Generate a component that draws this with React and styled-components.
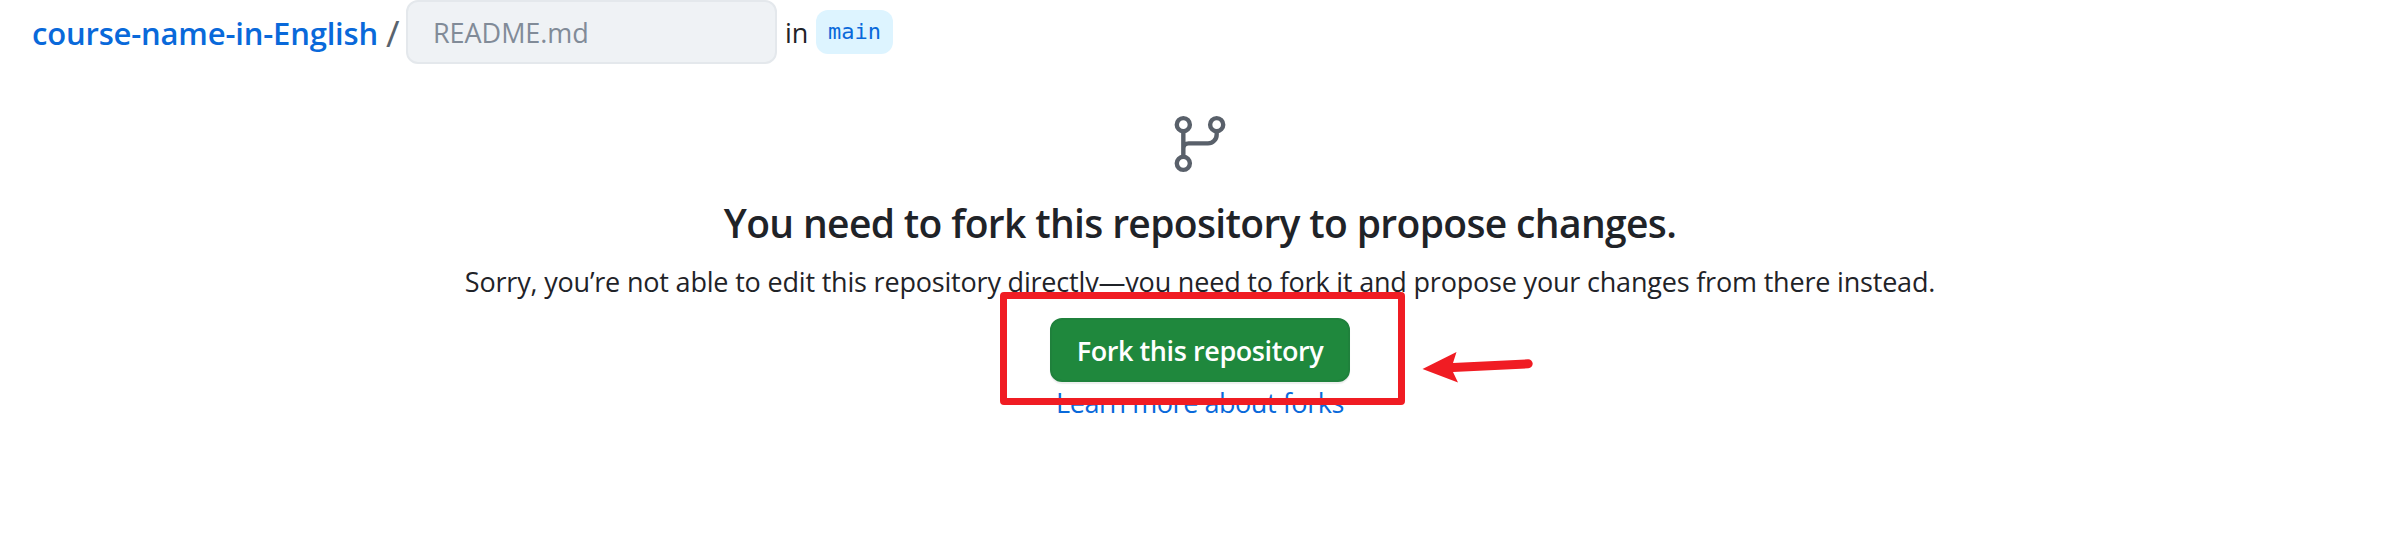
import React from "react";
import styled, { createGlobalStyle } from "styled-components";

const GlobalStyle = createGlobalStyle`
  * { box-sizing: border-box; }
  body {
    margin: 0;
    background: #fff;
    color: #1f2328;
    font-family: "Open Sans", "Noto Sans", sans-serif;
    font-size: 27px;
  }
`;

const Page = styled.div`
  position: relative;
  height: 552px;
  overflow: hidden;
`;

const Breadcrumb = styled.header`
  display: flex;
  align-items: center;
  height: 64px;
  padding-left: 32px;
  white-space: nowrap;
`;

const RepoLink = styled.a`
  width: 354px;
  color: #0969da;
  font-size: 31px;
  font-weight: 600;
  line-height: 42px;
  padding-top: 1px;
  letter-spacing: -0.18px;
`;

const Separator = styled.span`
  width: 20px;
  color: #59636e;
  font-size: 37px;
  line-height: 64px;
  padding-top: 2px;
`;

const FileName = styled.input`
  width: 371px;
  height: 64px;
  padding: 1px 25px 0;
  border: 2px solid #e4e8ec;
  border-radius: 12px;
  background: #eff2f5;
  color: #1f2328;
  font: inherit;
  letter-spacing: -0.05px;
  &::placeholder {
    color: #818b98;
    opacity: 1;
  }
`;

const InLabel = styled.span`
  width: 31px;
  margin-left: 8px;
`;

const Branch = styled.span`
  display: flex;
  align-items: center;
  justify-content: center;
  width: 77px;
  height: 44px;
  margin-bottom: 1px;
  padding-bottom: 1px;
  border-radius: 12px;
  background: #ddf4ff;
  color: #0969da;
  font: 22px "DejaVu Sans Mono", "Liberation Mono", monospace;
`;

const Blankslate = styled.main`
  display: flex;
  flex-direction: column;
  align-items: center;
  padding-top: 48px;
  white-space: nowrap;
`;

const BranchIcon = styled.svg`
  width: 64px;
  height: 64px;
  fill: none;
  stroke: #59606a;
  stroke-width: 1.65;
`;

const Title = styled.h1`
  margin: 17px 0 0;
  font-size: 39px;
  font-weight: 600;
  line-height: 60px;
  letter-spacing: -0.65px;
`;

const Description = styled.p`
  margin: 8px 0 0;
  line-height: 42px;
  letter-spacing: -0.19px;
`;

const ForkButton = styled.button`
  width: 300px;
  height: 64px;
  margin-top: 15px;
  padding: 0;
  border: 2px solid #1f813c;
  border-radius: 12px;
  background: #1f883d;
  box-shadow: 0 2px 1px rgba(31, 35, 40, 0.08);
  color: #fff;
  font: inherit;
  font-weight: 600;
  letter-spacing: -0.42px;
`;

const LearnLink = styled.a`
  color: #0969da;
  line-height: 42px;
  letter-spacing: -0.45px;
`;

const Highlight = styled.div`
  position: absolute;
  left: 1000px;
  top: 292px;
  width: 405px;
  height: 113px;
  border: 7px solid #f01c23;
  border-radius: 4px;
`;

const Arrow = styled.svg`
  position: absolute;
  left: 1420px;
  top: 350px;
  width: 116px;
  height: 36px;
  fill: #f01c23;
`;

export default function App() {
  return (
    <>
      <GlobalStyle />
      <Page>
        <Breadcrumb>
          <RepoLink>course-name-in-English</RepoLink>
          <Separator>/</Separator>
          <FileName placeholder="README.md" disabled />
          <InLabel>in</InLabel>
          <Branch>main</Branch>
        </Breadcrumb>
        <Blankslate>
          <BranchIcon viewBox="0 0 24 24">
            <circle cx="5.75" cy="4.75" r="2.45" />
            <circle cx="18.25" cy="4.75" r="2.45" />
            <circle cx="5.75" cy="19.25" r="2.45" />
            <path d="M5.75 7.25v9.5M18.25 7.25V8.5a3.25 3.25 0 0 1-3.25 3.25H7.75a2 2 0 0 0-2 2" />
          </BranchIcon>
          <Title>You need to fork this repository to propose changes.</Title>
          <Description>
            Sorry, you’re not able to edit this repository directly—you need to fork it and propose your changes from there instead.
          </Description>
          <ForkButton>Fork this repository</ForkButton>
          <LearnLink>Learn more about forks</LearnLink>
        </Blankslate>
        <Highlight />
        <Arrow viewBox="0 0 116 36">
          <path d="M2.5 19 36.5 2 33 13 108 9.3a4.5 4.5 0 0 1 .4 9L33 22 38 32.5Z" />
        </Arrow>
      </Page>
    </>
  );
}
